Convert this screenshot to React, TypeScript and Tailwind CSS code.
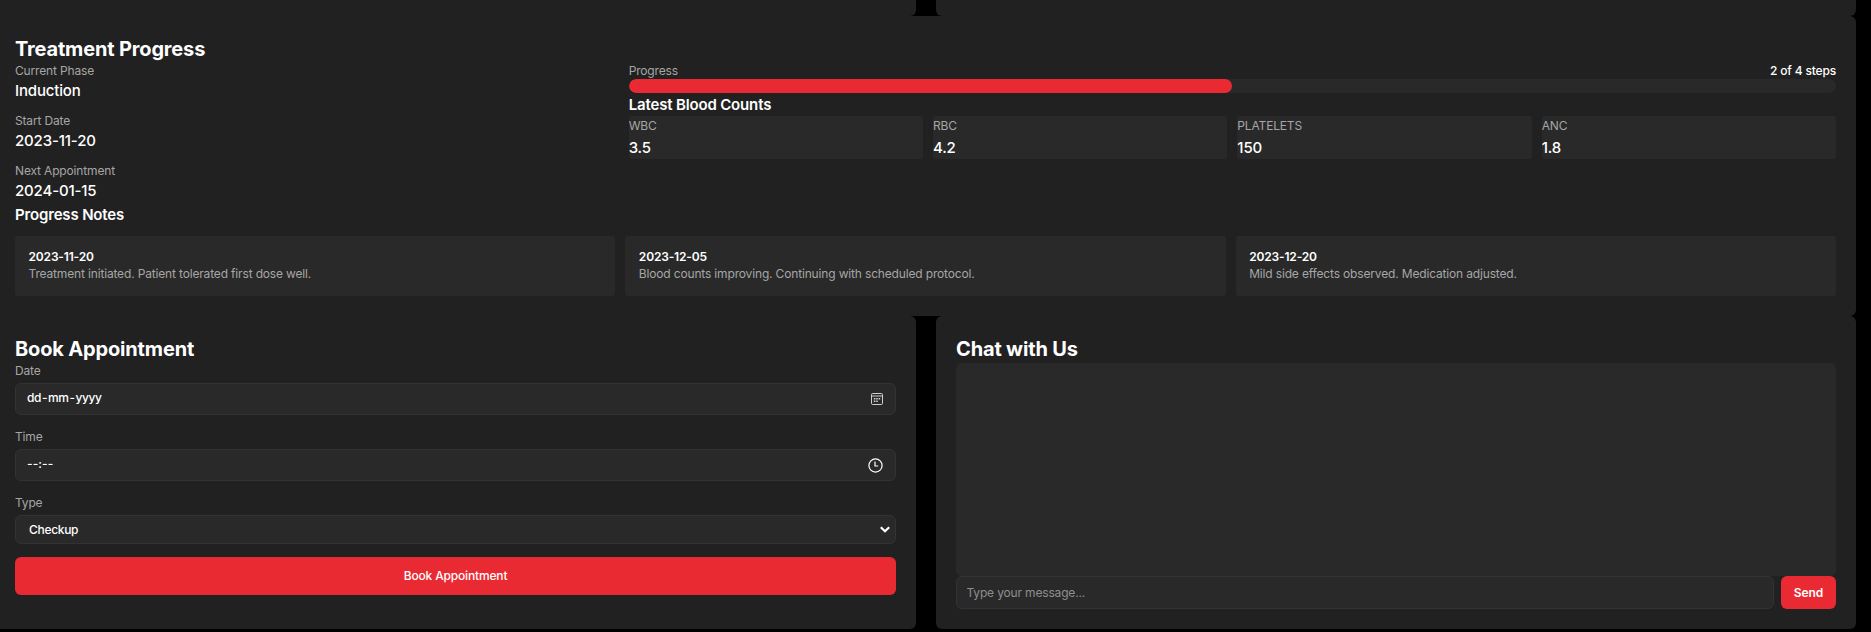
import React from "react";

const counts = [
  { label: "WBC", value: "3.5" },
  { label: "RBC", value: "4.2" },
  { label: "PLATELETS", value: "150" },
  { label: "ANC", value: "1.8" },
];

const notes = [
  { date: "2023-11-20", text: "Treatment initiated. Patient tolerated first dose well." },
  { date: "2023-12-05", text: "Blood counts improving. Continuing with scheduled protocol." },
  { date: "2023-12-20", text: "Mild side effects observed. Medication adjusted." },
];

const details = [
  { label: "Current Phase", value: "Induction" },
  { label: "Start Date", value: "2023-11-20" },
  { label: "Next Appointment", value: "2024-01-15" },
];

function Title({ children }: { children: React.ReactNode }) {
  return <h2 className="h-[26px] text-[20px] leading-[26px] font-bold">{children}</h2>;
}

function CalendarIcon() {
  return (
    <svg width="12" height="12" viewBox="0 0 12 12" fill="none" stroke="#cfcfcf">
      <rect x="0.5" y="0.5" width="11" height="11" rx="1.2" />
      <path d="M1 3h10" />
      <path d="M2.8 5.8h1.6M5.2 5.8h1.6M7.6 5.8h1.6M2.8 8.2h1.6M5.2 8.2h1.6" strokeWidth="1.5" />
    </svg>
  );
}

function ClockIcon() {
  return (
    <svg width="15" height="15" viewBox="0 0 15 15" fill="none" stroke="#fff" strokeWidth="1.2">
      <circle cx="7.5" cy="7.5" r="6.6" />
      <path d="M7 3.5V8h3.2" />
    </svg>
  );
}

function ChevronIcon() {
  return (
    <svg width="10" height="7" viewBox="0 0 10 7" fill="none" stroke="#fff" strokeWidth="2.2">
      <path d="M0.8 1.2L5 5.2L9.2 1.2" />
    </svg>
  );
}

export default function App() {
  return (
    <div className="h-[632px] w-full overflow-hidden bg-black font-['Inter',sans-serif] tracking-[-0.16px] text-white">
      <div className="-ml-[5px] w-[1861px]">
        <div className="grid grid-cols-[921px_920px] gap-[20px]">
          <div className="h-[16px] rounded-b-[6px] bg-[#212121]" />
          <div className="h-[16px] rounded-b-[6px] bg-[#212121]" />
        </div>

        <section className="h-[300px] rounded-[6px] bg-[#212121] p-[20px]">
          <Title>Treatment Progress</Title>
          <div className="grid grid-cols-[1fr_2fr] gap-[10px]">
            <div className="-mt-px flex flex-col gap-[10px]">
              {details.map((d) => (
                <div key={d.label}>
                  <div className="text-[12px] leading-[20px] text-[#a6a6a6]">{d.label}</div>
                  <div className="text-[15px] leading-[20px] font-medium">{d.value}</div>
                </div>
              ))}
            </div>
            <div>
              <div className="flex h-[17px] justify-between text-[12px] leading-[18px]">
                <span className="text-[#a6a6a6]">Progress</span>
                <span className="font-medium">2 of 4 steps</span>
              </div>
              <div className="h-[14px] overflow-hidden rounded-full bg-[#292929]">
                <div className="h-full w-1/2 rounded-full bg-[#ea2a33]" />
              </div>
              <h3 className="h-[23px] text-[15px] leading-[24px] font-semibold">Latest Blood Counts</h3>
              <div className="grid grid-cols-4 gap-[10px]">
                {counts.map((c) => (
                  <div key={c.label} className="h-[43px] rounded-[3px] bg-[#292929]">
                    <div className="text-[12px] leading-[20px] text-[#a6a6a6]">{c.label}</div>
                    <div className="text-[15px] leading-[24px] font-medium">{c.value}</div>
                  </div>
                ))}
              </div>
            </div>
          </div>
          <h3 className="h-[35px] text-[15px] leading-[28px] font-semibold">Progress Notes</h3>
          <div className="grid grid-cols-3 gap-[10px]">
            {notes.map((n) => (
              <div key={n.date} className="h-[60px] rounded-[3px] bg-[#292929] px-[13.5px] pt-[12px]">
                <div className="text-[12px] leading-[17px] font-semibold">{n.date}</div>
                <div className="text-[12px] leading-[17px] text-[#a6a6a6]">{n.text}</div>
              </div>
            ))}
          </div>
        </section>

        <div className="grid grid-cols-[921px_920px] gap-[20px]">
          <section className="h-[313px] rounded-[6px] bg-[#212121] p-[20px]">
            <Title>Book Appointment</Title>
            <div className="text-[12px] font-medium">
              <div className="h-[21px] leading-[18px] font-normal text-[#a6a6a6]">Date</div>
              <div className="flex h-[32px] items-center justify-between rounded-[6px] border border-[#333333] bg-[#292929] pr-[12px] pl-[11px]">
                <span className="flex pb-[2px] tracking-[-0.45px]">
                  <span>dd</span>
                  <span className="px-px">-</span>
                  <span>mm</span>
                  <span className="px-px">-</span>
                  <span>yyyy</span>
                </span>
                <CalendarIcon />
              </div>
              <div className="mt-[13px] h-[21px] leading-[18px] font-normal text-[#a6a6a6]">Time</div>
              <div className="flex h-[32px] items-center justify-between rounded-[6px] border border-[#333333] bg-[#292929] pr-[12px] pl-[11px]">
                <span className="pb-[2px] tracking-[0.1px]">--:--</span>
                <ClockIcon />
              </div>
              <div className="mt-[13px] h-[21px] leading-[18px] font-normal text-[#a6a6a6]">Type</div>
              <div className="flex h-[29px] items-center justify-between rounded-[6px] border border-[#333333] bg-[#292929] pr-[5px] pl-[13px]">
                <span className="tracking-[-0.3px]">Checkup</span>
                <ChevronIcon />
              </div>
              <button className="mt-[13px] block h-[38px] w-full rounded-[6px] bg-[#ea2a33] pb-px font-medium">
                Book Appointment
              </button>
            </div>
          </section>

          <section className="h-[313px] rounded-[6px] bg-[#212121] p-[20px]">
            <Title>Chat with Us</Title>
            <div className="mt-px h-[213px] rounded-[6px] bg-[#292929]" />
            <div className="flex gap-[7px]">
              <input
                placeholder="Type your message..."
                className="h-[33px] min-w-0 flex-1 rounded-[6px] border border-[#333333] bg-[#292929] px-[9.5px] text-[12px] outline-none placeholder:text-[#8e8e8e]"
              />
              <button className="h-[33px] w-[55px] rounded-[6px] bg-[#ea2a33] text-[12px] font-semibold tracking-normal">Send</button>
            </div>
          </section>
        </div>
      </div>
    </div>
  );
}
